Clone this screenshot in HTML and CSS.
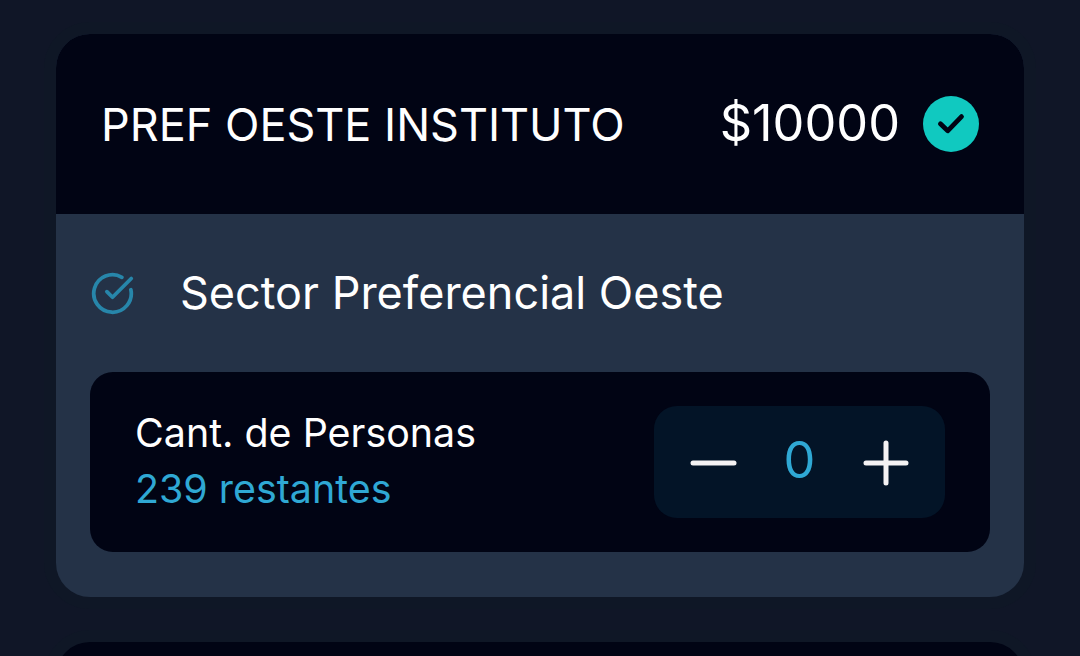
FILE: index.html
```html
<!DOCTYPE html>
<html lang="es">
<head>
    <meta charset="UTF-8">
    <meta name="viewport" content="width=device-width, initial-scale=1.0">
    <link rel="stylesheet" href="styles.css">
    <title>Entradas</title>
</head>
<body>
    <div class="container">
        <div class="card">
            <div class="card-header">
                <h2>PREF OESTE INSTITUTO</h2>
                <div class="price">
                    <span>$10000</span>
                    <svg class="badge" viewBox="0 0 56 56">
                        <circle cx="28" cy="28" r="28" fill="#10c9c0"/>
                        <path d="M17.4 27.8l7.3 7L38.5 20.6" fill="none" stroke="#010414" stroke-width="4.8" stroke-linecap="round" stroke-linejoin="round"/>
                    </svg>
                </div>
            </div>
            <div class="card-body">
                <div class="sector">
                    <svg class="sector-icon" viewBox="0 0 24 24">
                        <path d="M21.8 10A10 10 0 1 1 17 3.34"/>
                        <path d="M22 4L12 14.01l-3-3"/>
                    </svg>
                    <span>Sector Preferencial Oeste</span>
                </div>
                <div class="quantity">
                    <div class="quantity-text">
                        <div>Cant. de Personas</div>
                        <div class="remaining">239 restantes</div>
                    </div>
                    <div class="counter">
                        <button onclick="changeCount(-1)" aria-label="Restar">
                            <svg viewBox="0 0 48 48"><path d="M4 25h41"/></svg>
                        </button>
                        <span id="count">0</span>
                        <button onclick="changeCount(1)" aria-label="Sumar">
                            <svg viewBox="0 0 48 48"><path d="M4 25h40M24 5v40"/></svg>
                        </button>
                    </div>
                </div>
            </div>
        </div>
        <div class="card next-card"></div>
    </div>
    <script>
        let count = 0;

        function changeCount(step) {
            count = Math.min(239, Math.max(0, count + step));
            document.getElementById('count').textContent = count;
        }
    </script>
</body>
</html>
```
FILE: styles.css
```css
* {
    box-sizing: border-box;
}

body {
    font-family: 'Inter', sans-serif;
    background-color: #101627;
    color: #fff;
    margin: 0;
    height: 656px;
    overflow: hidden;
}

.container {
    padding: 34px 56px 0;
}

.card {
    border-radius: 34px;
    overflow: hidden;
    background-color: #243247;
    box-shadow: 0 0 0 12px rgba(12, 26, 38, 0.3);
}

.card-header {
    display: flex;
    align-items: center;
    justify-content: space-between;
    height: 180px;
    padding: 0 45px;
    background-color: #010414;
}

.card-header h2 {
    margin: 2px 0 0;
    font-size: 45px;
    font-weight: 400;
    line-height: 56px;
}

.price {
    display: flex;
    align-items: center;
    gap: 23px;
    font-size: 50.5px;
    line-height: 54px;
}

.price span {
    padding-bottom: 2px;
}

.badge {
    width: 56px;
    height: 56px;
}

.card-body {
    height: 383px;
    padding: 51px 34px 0;
}

.sector {
    display: flex;
    align-items: center;
    height: 56px;
    font-size: 45px;
}

.sector span {
    padding-bottom: 2px;
}

.sector-icon {
    width: 45px;
    height: 45px;
    margin-right: 45px;
    fill: none;
    stroke: #2786aa;
    stroke-width: 2;
    stroke-linecap: round;
    stroke-linejoin: round;
}

.quantity {
    display: flex;
    align-items: center;
    justify-content: space-between;
    height: 180px;
    margin-top: 51px;
    padding: 0 45px;
    border-radius: 23px;
    background-color: #010414;
}

.quantity-text {
    padding-bottom: 2px;
    font-size: 39.4px;
    line-height: 56px;
}

.remaining {
    color: #2fa8d4;
}

.counter {
    display: flex;
    align-items: center;
    justify-content: space-between;
    width: 291px;
    height: 112px;
    padding: 0 35px;
    border-radius: 23px;
    background-color: #031427;
    color: #2fa8d4;
    font-size: 50.5px;
}

.counter span {
    padding-bottom: 5px;
}

.counter button {
    width: 48px;
    height: 48px;
    padding: 0;
    border: none;
    background: none;
    cursor: pointer;
}

.counter svg {
    display: block;
    fill: none;
    stroke: #f4f2f3;
    stroke-width: 5;
    stroke-linecap: round;
}

.next-card {
    height: 180px;
    margin-top: 45px;
    background-color: #010414;
}
```
